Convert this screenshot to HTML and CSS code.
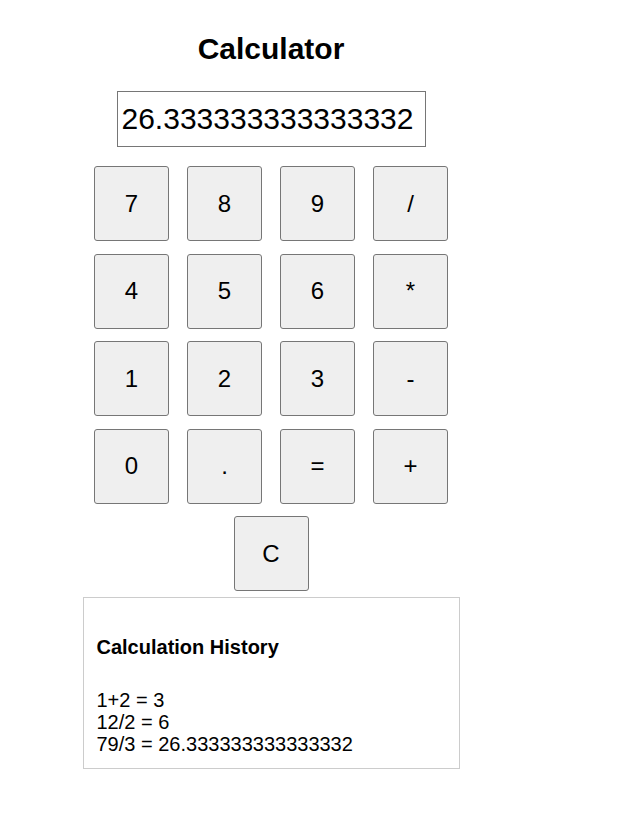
FILE: index.html
```html
<!DOCTYPE html>
<html>
<head>
<meta charset="utf-8">
<title>Calculator</title>
<link rel="stylesheet" href="styles.css">
</head>
<body>
<div class="app">
  <h1 class="title">Calculator</h1>
  <input class="display" type="text" value="26.333333333333332" readonly>
  <div class="keys">
    <button class="key">7</button>
    <button class="key">8</button>
    <button class="key">9</button>
    <button class="key">/</button>
    <button class="key">4</button>
    <button class="key">5</button>
    <button class="key">6</button>
    <button class="key">*</button>
    <button class="key">1</button>
    <button class="key">2</button>
    <button class="key">3</button>
    <button class="key">-</button>
    <button class="key">0</button>
    <button class="key">.</button>
    <button class="key">=</button>
    <button class="key">+</button>
  </div>
  <div class="clear-row">
    <button class="key">C</button>
  </div>
  <div class="history">
    <h3 class="history-title">Calculation History</h3>
    <div class="history-list">
      <div>1+2 = 3</div>
      <div>12/2 = 6</div>
      <div>79/3 = 26.333333333333332</div>
    </div>
  </div>
</div>
</body>
</html>
```

FILE: styles.css
```css
body {
  margin: 8px;
  font-family: "Liberation Sans", Arial, sans-serif;
  color: #000;
  background: #fff;
}

.app {
  width: 526px;
  display: flex;
  flex-direction: column;
  align-items: center;
}

.title {
  font-size: 30px;
  font-weight: bold;
  line-height: 34.5px;
  margin: 23.5px 0 25px 0;
}

.display {
  box-sizing: border-box;
  width: 309px;
  height: 56px;
  padding: 0 4px;
  border: 1px solid #767676;
  border-radius: 0;
  font-family: "Liberation Sans", Arial, sans-serif;
  font-size: 30px;
  color: #000;
  background: #fff;
  outline: none;
  margin: 0 0 19px 0;
}

.keys {
  display: grid;
  grid-template-columns: repeat(4, 75px);
  grid-auto-rows: 75px;
  column-gap: 18px;
  row-gap: 12.5px;
}

.key {
  box-sizing: border-box;
  width: 75px;
  height: 75px;
  padding: 0;
  margin: 0;
  background: #efefef;
  border: 1px solid #767676;
  border-radius: 3px;
  font-family: "Liberation Sans", Arial, sans-serif;
  font-size: 24px;
  color: #000;
  display: flex;
  align-items: center;
  justify-content: center;
}

.clear-row {
  display: flex;
  justify-content: center;
  margin-top: 12.5px;
}

.history {
  box-sizing: border-box;
  width: 377px;
  margin-top: 5.5px;
  padding: 12px 12px 13px 13px;
  border: 1px solid #ccc;
}

.history-title {
  font-size: 20px;
  font-weight: bold;
  line-height: 23px;
  margin: 26px 0 30px 0;
}

.history-list {
  font-size: 20px;
  line-height: 22px;
}
```
